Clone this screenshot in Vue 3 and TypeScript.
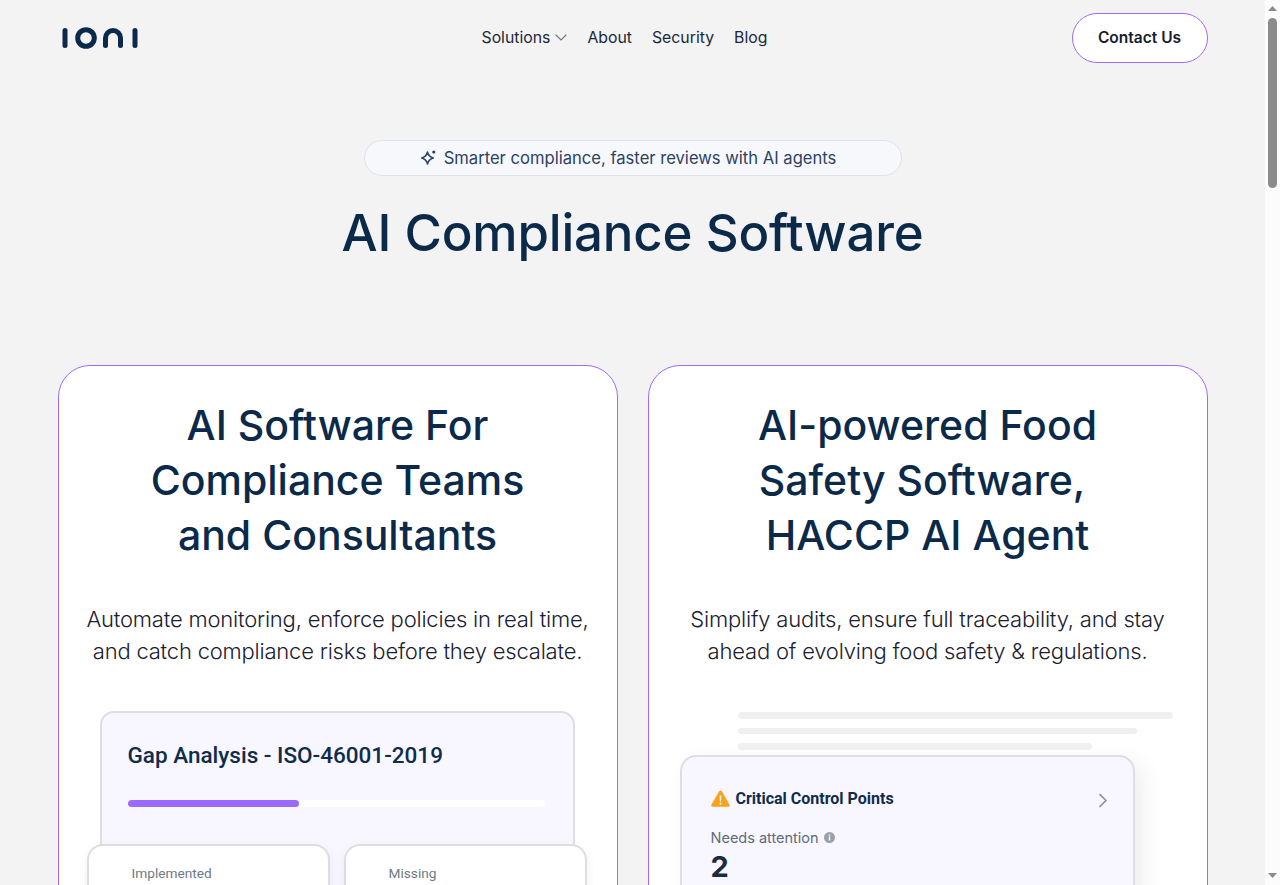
<script setup lang="ts">
const links: string[] = ['About', 'Security', 'Blog']
</script>

<template>
  <div class="shell">
    <div class="page">
      <header class="nav">
        <a class="logo" aria-label="ioni">
          <svg width="82" height="22" viewBox="-2 0 82 22" fill="none" stroke="#0b2a4a" stroke-width="5" stroke-linecap="round">
            <path d="M5 3.500V18.500" />
            <circle cx="26" cy="11" r="8.300" />
            <path d="M45.500 18.500V11a7.500 7.500 0 0 1 15 0v7.500" />
            <path d="M75 3.500V18.500" />
          </svg>
        </a>
        <nav class="links">
          <span class="link solutions">
            Solutions
            <svg width="12" height="7" viewBox="0 0 12 7" fill="none" stroke="#6f7785" stroke-width="1.200">
              <path d="M.7.8 6 6l5.300-5.200" />
            </svg>
          </span>
          <span v-for="l in links" :key="l" class="link">{{ l }}</span>
        </nav>
        <button class="contact">Contact Us</button>
      </header>

      <section class="hero">
        <div class="badge">
          <svg width="18" height="18" viewBox="0 0 18 18" fill="none" stroke="#2c4263" stroke-width="1.500" stroke-linejoin="round">
            <path d="M8.500 3c.8 3.500 2.200 5 5.800 6-3.600 1-5 2.500-5.800 6-.8-3.500-2.200-5-5.800-6 3.600-1 5-2.500 5.800-6Z" />
            <circle cx="14.800" cy="3" r="1.600" fill="#2c4263" stroke="none" />
          </svg>
          <span>Smarter compliance, faster reviews with AI agents</span>
        </div>
        <h1>AI Compliance Software</h1>
      </section>

      <section class="cards">
        <article class="card">
          <h2>AI Software For<br />Compliance Teams<br />and Consultants</h2>
          <p>Automate monitoring, enforce policies in real time,<br />and catch compliance risks before they escalate.</p>
          <div class="mock gap">
            <div class="gap-panel">
              <h3>Gap Analysis - ISO-46001-2019</h3>
              <div class="track"><div class="fill"></div></div>
            </div>
            <div class="gap-stats">
              <div class="stat"><span>Implemented</span></div>
              <div class="stat"><span>Missing</span></div>
            </div>
          </div>
        </article>

        <article class="card">
          <h2>AI-powered Food<br />Safety Software,&nbsp;<br />HACCP AI Agent</h2>
          <p>Simplify audits, ensure full traceability, and stay<br />ahead of evolving food safety &amp; regulations.</p>
          <div class="mock ccp">
            <div class="lines">
              <i class="l1"></i>
              <i class="l2"></i>
              <i class="l3"></i>
            </div>
            <div class="ccp-panel">
              <div class="ccp-head">
                <svg width="19" height="17" viewBox="0 0 19 17">
                  <path d="M8.300 1.100a1.400 1.400 0 0 1 2.400 0l7.900 13.600a1.400 1.400 0 0 1-1.200 2.100H1.600a1.400 1.400 0 0 1-1.200-2.100Z" fill="#f8a31c" />
                  <path d="M8.700 5.500h1.600l-.2 6H8.900Z" fill="#fff" />
                  <circle cx="9.500" cy="13.800" r="1" fill="#fff" />
                </svg>
                <strong>Critical Control Points</strong>
                <svg class="chev" width="10" height="15" viewBox="0 0 10 15" fill="none" stroke="#8c96a3" stroke-width="1.700">
                  <path d="M1.500 1.200 8 7.500l-6.500 6.300" />
                </svg>
              </div>
              <div class="needs">
                Needs attention
                <svg width="11" height="11" viewBox="0 0 11 11">
                  <circle cx="5.500" cy="5.500" r="5.500" fill="#98a1ad" />
                  <rect x="4.800" y="4.600" width="1.400" height="3.900" fill="#fff" />
                  <rect x="4.800" y="2.500" width="1.400" height="1.400" fill="#fff" />
                </svg>
              </div>
              <div class="count">2</div>
            </div>
          </div>
        </article>
      </section>
    </div>

    <div class="scrollbar" aria-hidden="true">
      <svg class="arrow up" width="9" height="5" viewBox="0 0 9 5"><path d="M4.500 0 9 5H0Z" fill="#8a8b8a" /></svg>
      <div class="thumb"></div>
      <svg class="arrow down" width="9" height="5" viewBox="0 0 9 5"><path d="M0 0h9L4.500 5Z" fill="#8a8b8a" /></svg>
    </div>
  </div>
</template>

<style>
html, body {
  margin: 0;
  background: #f3f3f3;
}
</style>

<style scoped>
.shell {
  width: 1265px;
}
.page {
  width: 1150px;
  margin: 0 auto;
  padding-bottom: 60px;
  font-family: Inter, "Liberation Sans", sans-serif;
  color: #0b2a4a;
}
.scrollbar {
  position: fixed;
  top: 0;
  right: 0;
  bottom: 0;
  width: 15px;
  background: #fcfcfc;
}
.arrow {
  position: absolute;
  left: 3px;
}
.up { top: 6px; }
.down { bottom: 7px; }
.thumb {
  position: absolute;
  top: 18px;
  left: 3px;
  width: 9px;
  height: 170px;
  background: #8a8b8a;
  border-radius: 5px;
}
.nav {
  display: grid;
  grid-template-columns: 424px auto 1fr;
  align-items: center;
  padding-top: 13px;
  height: 50px;
}
.logo {
  display: flex;
  height: 22px;
  margin-top: -1px;
}
.links {
  display: flex;
  align-items: center;
  gap: 20px;
  font-size: 15.800px;
  color: #20283a;
  margin-top: -1px;
}
.link {
  white-space: nowrap;
}
.solutions {
  display: flex;
  align-items: center;
  gap: 5px;
}
.contact {
  justify-self: end;
  width: 136px;
  height: 50px;
  background: #fff;
  border: 1px solid #9b6bff;
  border-radius: 25px;
  font: 600 15.500px Inter, "Liberation Sans", sans-serif;
  color: #161c2b;
  padding: 0 0 2px;
}
.hero {
  display: flex;
  flex-direction: column;
  align-items: center;
  padding-top: 77px;
}
.badge {
  box-sizing: border-box;
  width: 538px;
  height: 36px;
  display: flex;
  align-items: center;
  justify-content: center;
  gap: 7px;
  padding-right: 10px;
  background: #f7f8fc;
  border: 1px solid #dfe1ee;
  border-radius: 18px;
  font-size: 16.600px;
  color: #2c4263;
}
h1 {
  margin: 22px 0 0;
  font-size: 51px;
  line-height: 70px;
  font-weight: 500;
  letter-spacing: -0.200px;
}
.cards {
  display: grid;
  grid-template-columns: 560px 560px;
  gap: 30px;
  margin-top: 97px;
}
.card {
  box-sizing: border-box;
  height: 980px;
  background: #fff;
  border: 1px solid #9b6bff;
  border-radius: 32px;
  padding: 32px 24px 0;
  text-align: center;
  overflow: hidden;
}
h2 {
  margin: 0;
  font-size: 41px;
  line-height: 55px;
  font-weight: 500;
}
p {
  margin: 40px 0 0;
  font-size: 22px;
  line-height: 32px;
  font-weight: 300;
  letter-spacing: -0.200px;
  color: #1a2030;
}
.mock {
  margin: 44px -24px 0;
  position: relative;
  text-align: left;
}
.gap-panel {
  box-sizing: border-box;
  width: 475px;
  height: 300px;
  margin-left: 41px;
  padding: 27px 28px 0 26px;
  background: #f8f6fe;
  border: 2px solid #dedde3;
  border-radius: 14px;
}
h3 {
  margin: 0;
  font: 500 22.500px/30px Roboto, sans-serif;
  color: #0f2c4b;
}
.track {
  height: 7px;
  margin-top: 30px;
  width: 417px;
  background: #fff;
  border-radius: 4px;
}
.fill {
  width: 171px;
  height: 7px;
  background: #9b6bff;
  border-radius: 4px;
}
.gap-stats {
  position: absolute;
  top: 133px;
  left: 28px;
  display: flex;
  gap: 14px;
}
.stat {
  box-sizing: border-box;
  width: 243px;
  height: 150px;
  background: #fff;
  border: 2px solid #dedde3;
  border-radius: 16px;
  box-shadow: 0 4px 12px rgba(30, 30, 60, 0.06);
  padding: 17px 0 0 43px;
  font: 400 13.700px/20px Roboto, sans-serif;
  color: #717985;
}
.lines {
  display: flex;
  flex-direction: column;
  gap: 9px;
  margin-left: 89px;
  padding-top: 1px;
}
.lines i {
  display: block;
  height: 6.500px;
  background: #f0f0f0;
  border-radius: 4px;
}
.l1 { width: 435px; }
.l2 { width: 399px; }
.l3 { width: 354px; }
.ccp-panel {
  box-sizing: border-box;
  width: 455px;
  height: 300px;
  margin: 5px 0 0 31px;
  padding: 30px 25px 0 29px;
  background: #f8f6fe;
  border: 2px solid #dedde3;
  border-radius: 16px;
  box-shadow: 8px 8px 22px rgba(40, 40, 70, 0.08);
}
.ccp-head {
  display: flex;
  align-items: center;
  gap: 6px;
  height: 24px;
}
.ccp-head strong {
  font: 700 16px/24px Roboto, sans-serif;
  color: #0f2c4b;
}
.chev {
  margin-left: auto;
  margin-top: 4px;
}
.needs {
  display: flex;
  align-items: center;
  gap: 5px;
  margin-top: 17px;
  font-size: 14.500px;
  line-height: 20px;
  color: #5f6b7a;
}
.count {
  margin-top: 1px;
  font-size: 29px;
  line-height: 36px;
  font-weight: 700;
  color: #1a2b42;
}
</style>
